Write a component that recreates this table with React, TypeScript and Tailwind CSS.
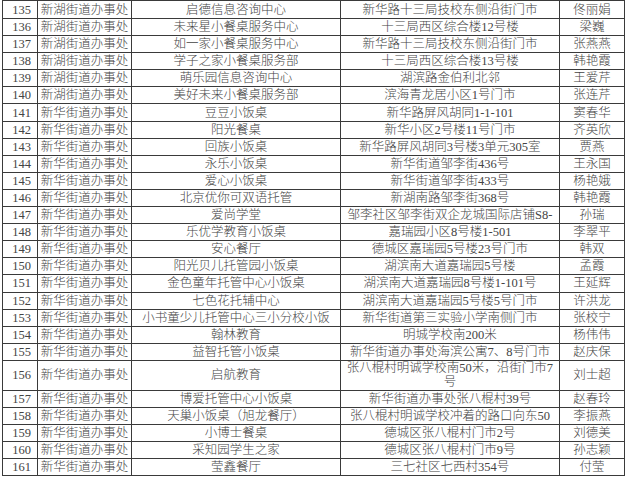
import React from "react";

type Row = [string, string, string, string, string];

const rows: Row[] = [
  ["135", "新湖街道办事处", "启德信息咨询中心", "新华路十三局技校东侧沿街门市", "佟丽娟"],
  ["136", "新湖街道办事处", "未来星小餐桌服务中心", "十三局西区综合楼12号楼", "梁巍"],
  ["137", "新湖街道办事处", "如一家小餐桌服务中心", "新华路十三局技校东侧沿街门市", "张燕燕"],
  ["138", "新湖街道办事处", "学子之家小餐桌服务部", "十三局西区综合楼13号楼", "韩艳霞"],
  ["139", "新湖街道办事处", "萌乐园信息咨询中心", "湖滨路金伯利北邻", "王爱芹"],
  ["140", "新湖街道办事处", "美好未来小餐桌服务部", "滨海青龙居小区1号门市", "张连芹"],
  ["141", "新华街道办事处", "豆豆小饭桌", "新华路屏风胡同1-1-101", "窦春华"],
  ["142", "新华街道办事处", "阳光餐桌", "新华小区2号楼11号门市", "齐英欣"],
  ["143", "新华街道办事处", "回族小饭桌", "新华路屏风胡同3号楼3单元305室", "贾燕"],
  ["144", "新华街道办事处", "永乐小饭桌", "新华街道邹李街436号", "王永国"],
  ["145", "新华街道办事处", "爱心小饭桌", "新华街道邹李街433号", "杨艳娥"],
  ["146", "新华街道办事处", "北京优你可双语托管", "新湖南路邹李街368号", "韩艳霞"],
  ["147", "新华街道办事处", "爱尚学堂", "邹李社区邹李街双企龙城国际店铺S8-", "孙瑞"],
  ["148", "新华街道办事处", "乐优学教育小饭桌", "嘉瑞园小区8号楼1-501", "李翠平"],
  ["149", "新华街道办事处", "安心餐厅", "德城区嘉瑞园5号楼23号门市", "韩双"],
  ["150", "新华街道办事处", "阳光贝儿托管园小饭桌", "湖滨南大道嘉瑞园5号楼", "孟霞"],
  ["151", "新华街道办事处", "金色童年托管中心小饭桌", "湖滨南大道嘉瑞园8号楼1-101号", "王延辉"],
  ["152", "新华街道办事处", "七色花托辅中心", "湖滨南大道嘉瑞园5号楼5号门市", "许洪龙"],
  ["153", "新华街道办事处", "小书童少儿托管中心三小分校小饭", "新华街道第三实验小学南侧门市", "张校宁"],
  ["154", "新华街道办事处", "翰林教育", "明城学校南200米", "杨伟伟"],
  ["155", "新华街道办事处", "益智托管小饭桌", "新华街道办事处海滨公寓7、8号门市", "赵庆保"],
  ["156", "新华街道办事处", "启航教育", "张八棍村明诚学校南50米，沿街门市7号", "刘士超"],
  ["157", "新华街道办事处", "博爱托管中心小饭桌", "新华街道办事处张八棍村39号", "赵春玲"],
  ["158", "新华街道办事处", "天巢小饭桌（旭龙餐厅）", "张八棍村明诚学校冲着的路口向东50", "李振燕"],
  ["159", "新华街道办事处", "小博士餐桌", "德城区张八棍村门市2号", "刘德美"],
  ["160", "新华街道办事处", "采知园学生之家", "德城区张八棍村门市9号", "孙志颖"],
  ["161", "新华街道办事处", "莹鑫餐厅", "三七社区七西村354号", "付莹"],
];

function rowHeight(i: number, id: string): string {
  if (i === 0) return "h-[18px]";
  if (id === "156") return "h-[30px]";
  return "h-[17.1px]";
}

export default function App() {
  return (
    <div
      className="w-[628px] h-[477px] bg-white overflow-hidden text-[#444] font-light text-[12.5px] leading-[14px]"
      style={{ fontFamily: '"Liberation Serif", "Noto Sans CJK SC", serif' }}
    >
      <div className="ml-[2px] w-[623px] border-l border-t border-[#3a3a3a]">
        {rows.map((r, i) => (
          <div
            key={r[0]}
            className={`grid grid-cols-[35px_94px_209px_219px_65px] ${rowHeight(i, r[0])}`}
          >
            <div className="flex items-center justify-center border-r border-b border-[#3a3a3a] pl-[3px]">
              {r[0]}
            </div>
            <div className="flex items-center justify-center border-r border-b border-[#3a3a3a] overflow-hidden whitespace-nowrap">
              {r[1]}
            </div>
            <div className="flex items-center justify-center border-r border-b border-[#3a3a3a] overflow-hidden whitespace-nowrap">
              {r[2]}
            </div>
            <div className="flex items-center justify-center border-r border-b border-[#3a3a3a] overflow-hidden px-[1px] text-center">
              <span className={r[0] === "156" ? "" : "whitespace-nowrap"}>{r[3]}</span>
            </div>
            <div className="flex items-center justify-center border-r border-b border-[#3a3a3a] overflow-hidden whitespace-nowrap">
              {r[4]}
            </div>
          </div>
        ))}
      </div>
    </div>
  );
}
